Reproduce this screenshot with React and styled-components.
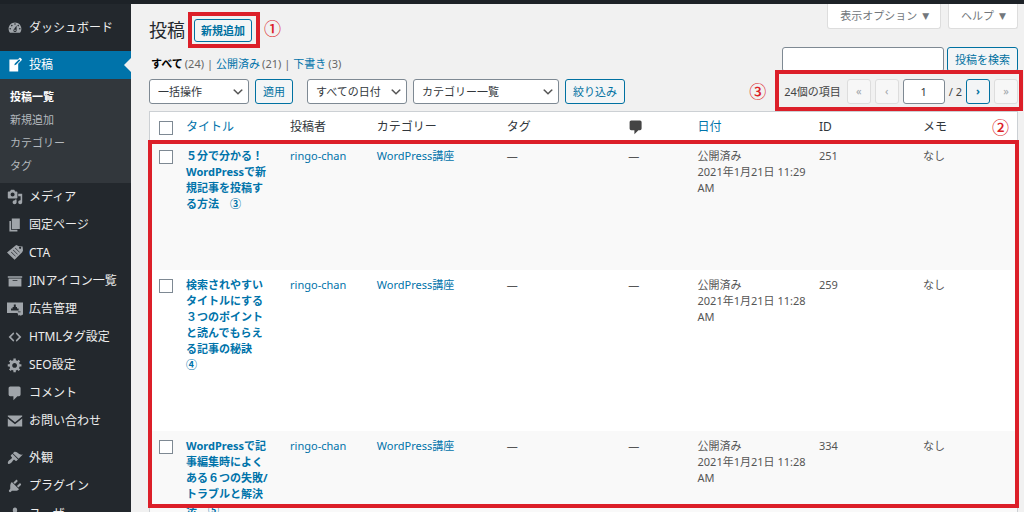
import React, { useState } from 'react';
import styled, { createGlobalStyle, css } from 'styled-components';

const GlobalStyle = createGlobalStyle`
  * {
    box-sizing: border-box;
  }
  body {
    margin: 0;
    background: #f1f1f1;
    color: #444;
    font-family: 'Noto Sans', 'Noto Sans CJK JP', sans-serif;
    font-size: 11px;
    line-height: 16px;
  }
  button, input, select {
    font: inherit;
    margin: 0;
  }
  a {
    color: #0073aa;
    text-decoration: none;
  }
`;

const Page = styled.div`
  display: flex;
  flex-direction: column;
  height: 100vh;
  overflow: hidden;
`;
const AdminBar = styled.header`
  flex: none;
  height: 4px;
  background: #1d2227;
`;
const Columns = styled.div`
  display: flex;
  flex: 1;
  min-height: 0;
`;

const Sidebar = styled.nav`
  flex: none;
  width: 131px;
  padding-top: 10px;
  background: #23282d;
  overflow: hidden;
`;
const Menu = styled.ul`
  list-style: none;
  margin: 0 0 9px;
  padding: 0;
`;
const MenuLink = styled.a`
  position: relative;
  display: flex;
  align-items: center;
  gap: 6px;
  height: 28px;
  padding-left: 7px;
  font-size: 12px;
  white-space: nowrap;
  color: #eee;
  svg {
    flex: none;
    fill: #a0a5aa;
  }
  ${({ $current }) =>
    $current &&
    css`
      background: #0073aa;
      color: #fff;
      svg {
        fill: #fff;
      }
      &::after {
        content: '';
        position: absolute;
        right: 0;
        border: 7px solid transparent;
        border-right-color: #f1f1f1;
        border-left: none;
      }
    `}
`;
const SubMenu = styled.ul`
  list-style: none;
  margin: 0;
  padding: 6px 0;
  background: #32373c;
`;
const SubLink = styled.a`
  display: block;
  padding-left: 10px;
  line-height: 23px;
  color: ${({ $current }) => ($current ? '#fff' : '#b4b9be')};
  font-weight: ${({ $current }) => ($current ? 700 : 400)};
`;

const Content = styled.main`
  flex: 1;
  min-width: 0;
  padding: 0 6px 0 18px;
`;
const TopRow = styled.div`
  display: flex;
  justify-content: space-between;
  align-items: flex-start;
  height: 43px;
`;
const TitleBar = styled.div`
  display: flex;
  align-items: center;
  gap: 9px;
  padding-top: 15px;
`;
const Heading = styled.h1`
  margin: 0;
  font-size: 18px;
  line-height: 23px;
  font-weight: 400;
  color: #23282d;
`;
const ScreenLinks = styled.div`
  display: flex;
  gap: 7px;
`;
const ScreenButton = styled.button`
  display: flex;
  align-items: center;
  gap: 5px;
  height: 25px;
  padding: 0 11px 0 12px;
  background: #fff;
  border: 1px solid #ddd;
  border-top: none;
  border-radius: 0 0 3px 3px;
  color: #72777c;
  cursor: pointer;
  &::after {
    content: '▼';
    font-family: 'DejaVu Sans', sans-serif;
    font-size: 9px;
  }
`;

const Button = styled.button`
  height: ${({ $small }) => ($small ? '23px' : '25px')};
  padding: 0 ${({ $small }) => ($small ? '6px' : '7px')};
  border: 1px solid #0071a1;
  border-radius: 3px;
  background: #f3f5f6;
  color: #0071a1;
  font-weight: ${({ $small }) => ($small ? 700 : 400)};
  white-space: nowrap;
  cursor: pointer;
`;
const TextInput = styled.input`
  width: ${({ $width }) => $width};
  height: 25px;
  padding: 0 6px;
  border: 1px solid #7e8993;
  border-radius: 3px;
  background: #fff;
  color: #32373c;
  text-align: ${({ $align }) => $align || 'left'};
`;

const FilterRow = styled.div`
  display: flex;
  justify-content: space-between;
  align-items: flex-start;
`;
const StatusList = styled.ul`
  display: flex;
  list-style: none;
  margin: 0;
  padding: 9px 0 0 2px;
  color: #666;
  li + li::before {
    content: '|';
    margin: 0 3px;
  }
`;
const StatusLink = styled.a`
  margin-right: 2px;
  ${({ $current }) =>
    $current &&
    css`
      color: #000;
      font-weight: 700;
    `}
`;
const SearchBox = styled.form`
  display: flex;
  gap: 3px;
`;
const Actions = styled.div`
  display: flex;
  align-items: center;
  gap: 6px;
`;
const TableNav = styled.div`
  display: flex;
  justify-content: space-between;
  align-items: center;
  margin: 7px 0;
`;
const SelectBox = styled.span`
  position: relative;
  display: inline-flex;
  width: ${({ $width }) => $width};
  margin-left: ${({ $gap }) => $gap || 0};
  svg {
    position: absolute;
    right: 4px;
    top: 6px;
    fill: #555;
    pointer-events: none;
  }
`;
const Select = styled.select`
  appearance: none;
  width: 100%;
  height: 25px;
  padding: 0 20px 0 8px;
  border: 1px solid #7e8993;
  border-radius: 3px;
  background: #fff;
  color: #32373c;
`;

const Pagination = styled.div`
  position: relative;
  display: flex;
  align-items: center;
  gap: 4px;
`;
const Count = styled.span`
  margin-right: 2px;
`;
const PageButton = styled.button`
  width: 24px;
  height: 25px;
  padding: 0 0 2px;
  border: 1px solid ${({ disabled }) => (disabled ? '#ddd' : '#0071a1')};
  border-radius: 3px;
  background: ${({ disabled }) => (disabled ? '#f7f7f7' : '#f3f5f6')};
  color: ${({ disabled }) => (disabled ? '#a0a5aa' : '#0071a1')};
  font-weight: ${({ disabled }) => (disabled ? 400 : 700)};
`;

const TableWrap = styled.div`
  flex: 1;
  border: 1px solid #ccd0d4;
  background: #fff;
`;
const Table = styled.table`
  width: 100%;
  table-layout: fixed;
  border-collapse: collapse;
  th, td {
    padding: 7px 0 0 8px;
    text-align: left;
    vertical-align: top;
    font-weight: 400;
  }
  thead th {
    height: 29px;
    font-size: 12px;
    color: #32373c;
    vertical-align: middle;
    padding: 0 0 0 8px;
  }
  thead svg {
    display: block;
    fill: #444;
  }
  tbody td {
    color: #555;
  }
  tbody tr:nth-child(odd) {
    background: #f9f9f9;
  }
`;
const Col = styled.col`
  width: ${({ $width }) => $width};
`;
const Checkbox = styled.input`
  appearance: none;
  display: block;
  width: 14px;
  height: 14px;
  margin: 2px 0 0 1px;
  border: 1px solid #7e8993;
  background: #fff;
  &:checked {
    background: #0073aa;
  }
`;
const TitleCell = styled.td`
  && {
    padding-bottom: 58px;
  }
`;
const TitleLink = styled.a`
  display: block;
  font-weight: 700;
  white-space: pre;
`;

const Marked = styled.div`
  position: relative;
  display: flex;
`;
const MarkFrame = styled.span`
  position: absolute;
  inset: ${({ $inset }) => $inset};
  border: 4px solid #dc1f29;
  pointer-events: none;
`;
const MarkNumber = styled.span`
  position: absolute;
  ${({ $place }) => $place}
  font-size: 17px;
  line-height: 20px;
  font-weight: 500;
  font-family: 'Noto Sans CJK JP', sans-serif;
  color: #dc1f29;
`;

const icons = {
  dashboard:
    'M3.76 16h12.48c1.1-1.37 1.76-3.11 1.76-5 0-4.42-3.58-8-8-8s-8 3.58-8 8c0 1.89.66 3.63 1.76 5zM10 4c.55 0 1 .45 1 1s-.45 1-1 1-1-.45-1-1 .45-1 1-1zM6 6c.55 0 1 .45 1 1s-.45 1-1 1-1-.45-1-1 .45-1 1-1zm8 0c.55 0 1 .45 1 1s-.45 1-1 1-1-.45-1-1 .45-1 1-1zm-5.37 5.55L12 7v6c0 1.1-.9 2-2 2s-2-.9-2-2c0-.57.24-1.08.63-1.45zM4 10c.55 0 1 .45 1 1s-.45 1-1 1-1-.45-1-1 .45-1 1-1zm12 0c.55 0 1 .45 1 1s-.45 1-1 1-1-.45-1-1 .45-1 1-1zm-5 3c0-.55-.45-1-1-1s-1 .45-1 1 .45 1 1 1 1-.45 1-1z',
  write:
    'M16.89 1.2l1.41 1.41c.39.39.39 1.02 0 1.41L14 8.33V18H3V3h10.67l1.8-1.8c.4-.39 1.03-.4 1.42 0zm-5.66 8.48l5.37-5.36-1.42-1.42-5.36 5.37-.71 2.12z',
  media:
    'M13 11V4c0-.55-.45-1-1-1h-1.67L9 1H5L3.67 3H2c-.55 0-1 .45-1 1v7c0 .55.45 1 1 1h10c.55 0 1-.45 1-1zM7 4.5c1.38 0 2.5 1.12 2.5 2.5S8.38 9.5 7 9.5 4.5 8.38 4.5 7 5.62 4.5 7 4.5zM14 6h5v10.5c0 1.38-1.12 2.5-2.5 2.5S14 17.88 14 16.5s1.12-2.5 2.5-2.5c.17 0 .34.02.5.05V9h-3V6zm-4 8.05V13h2v3.5c0 1.38-1.12 2.5-2.5 2.5S7 17.88 7 16.5 8.12 14 9.5 14c.17 0 .34.02.5.05z',
  page: 'M6 15V2h10v13H6zm-1 1h8v2H3V5h2v11z',
  ticket:
    'M11.500 0l3.500 1.500 4.500.5.500 5-1 2-9.500 9.500L0 9.500zM15 3.500a1.400 1.400 0 1 0 2.800 0 1.400 1.400 0 1 0-2.800 0zM10 4l5.500 5.500.5-.5L10.500 3.500zM7.500 6.500l5.500 5.500.5-.5L8 6zM5 9l5.500 5.500.5-.5L5.500 8.500z',
  archive: 'M19 4v2H1V4h18zM2 7h16v10H2V7zm11 3V9H7v1h6z',
  ads: 'M0 2h20v15l-3 1.500-1-1-1.500 1-1.500-3.500H0zM8.500 4.500h2.500v3h1.500v2h2v2.500H5v-2.500h2v-2h1.500zM13.500 13l.5 1h3v-1z',
  code: 'M9 6l-4 4 4 4-1 2-6-6 6-6zm2 8l4-4-4-4 1-2 6 6-6 6z',
  gear: 'M18 12h-2.18c-.17.7-.44 1.35-.81 1.93l1.54 1.54-2.1 2.1-1.54-1.54c-.58.36-1.23.63-1.91.79V19H8v-2.18c-.68-.16-1.33-.43-1.91-.79l-1.54 1.54-2.12-2.12 1.54-1.54c-.36-.58-.63-1.23-.79-1.91H1V9.03h2.17c.16-.7.44-1.35.8-1.94L2.43 5.55l2.1-2.1 1.54 1.54c.58-.37 1.24-.64 1.93-.81V2h3v2.18c.68.16 1.33.43 1.91.79l1.54-1.54 2.12 2.12-1.54 1.54c.36.59.64 1.24.8 1.94H18V12zm-8.5 1.5c1.66 0 3-1.34 3-3s-1.34-3-3-3-3 1.34-3 3 1.34 3 3 3z',
  comment: 'M4 2h11c1.1 0 2 .9 2 2v8c0 1.1-.9 2-2 2h-2l-5 5v-5H4c-1.1 0-2-.9-2-2V4c0-1.1.9-2 2-2z',
  mail: 'M1 3h18v1.500l-9 7-9-7zM1 7l9 7 9-7v10H1z',
  brush:
    'M14.48 11.06L7.41 3.99l1.5-1.5c.5-.56 2.3-.47 3.51.32 1.21.8 1.43 1.28 2.91 2.1 1.18.64 2.45 1.26 4.45.85zm-.71.71L6.7 4.7 4.93 6.47c-.39.39-.39 1.02 0 1.41l1.06 1.06c.39.39.39 1.03 0 1.42-.6.6-1.43 1.11-2.21 1.69-.35.26-.7.53-1.01.84C1.43 14.23.4 16.08 1.4 17.07c.99 1 2.84-.03 4.18-1.36.31-.31.58-.66.85-1.02.57-.78 1.08-1.61 1.69-2.21.39-.39 1.02-.39 1.41 0l1.06 1.06c.39.39 1.02.39 1.41 0z',
  plug: 'M13.11 4.36L9.87 7.6 8 5.73l3.24-3.24c.35-.34 1.05-.2 1.56.32.52.51.66 1.21.31 1.55zm-8 1.77l.91-1.12 9.01 9.01-1.19.84c-.71.71-2.63 1.16-3.82 1.16H6.14L4.9 17.26c-.59.59-1.54.59-2.12 0-.59-.58-.59-1.53 0-2.12l1.24-1.24v-3.88c0-1.13.4-3.19 1.09-3.89zm7.26 3.97l3.24-3.24c.34-.35 1.04-.21 1.55.31.52.51.66 1.21.31 1.55l-3.24 3.25z',
  user: 'M10 9.25c-2.27 0-2.73-3.44-2.73-3.44C7 4.02 7.82 2 9.97 2c2.16 0 2.98 2.02 2.71 3.81 0 0-.41 3.44-2.68 3.44zm0 2.57L12.72 10c2.39 0 4.52 2.33 4.52 4.53v2.49s-3.65 1.13-7.24 1.13c-3.65 0-7.24-1.13-7.24-1.13v-2.49c0-2.25 1.94-4.48 4.47-4.48z',
  down: 'M5 6l5 5 5-5 2 1-7 7-7-7 2-1z'
};

const Icon = ({ name, size = 16 }) => (
  <svg width={size} height={size} viewBox="0 0 20 20" fillRule="evenodd" aria-hidden="true">
    <path d={icons[name]} />
  </svg>
);

const menuGroups = [
  [{ icon: 'dashboard', label: 'ダッシュボード' }],
  [
    { icon: 'write', label: '投稿', current: true, children: ['投稿一覧', '新規追加', 'カテゴリー', 'タグ'] },
    { icon: 'media', label: 'メディア' },
    { icon: 'page', label: '固定ページ' },
    { icon: 'ticket', label: 'CTA' },
    { icon: 'archive', label: 'JINアイコン一覧' },
    { icon: 'ads', label: '広告管理' },
    { icon: 'code', label: 'HTMLタグ設定' },
    { icon: 'gear', label: 'SEO設定' },
    { icon: 'comment', label: 'コメント' },
    { icon: 'mail', label: 'お問い合わせ' }
  ],
  [
    { icon: 'brush', label: '外観' },
    { icon: 'plug', label: 'プラグイン' },
    { icon: 'user', label: 'ユーザー' }
  ]
];

const statuses = [
  { label: 'すべて', count: 24, current: true },
  { label: '公開済み', count: 21 },
  { label: '下書き', count: 3 }
];

const posts = [
  { id: 251, title: '５分で分かる！\nWordPressで新\n規記事を投稿す\nる方法　③', date: '2021年1月21日 11:29 AM' },
  {
    id: 259,
    title: '検索されやすい\nタイトルにする\n３つのポイント\nと読んでもらえ\nる記事の秘訣\n④',
    date: '2021年1月21日 11:28 AM'
  },
  {
    id: 334,
    title: 'WordPressで記\n事編集時によく\nある６つの失敗/\nトラブルと解決\n法　⑤',
    date: '2021年1月21日 11:28 AM'
  }
];

const columnWidths = ['28px', '12%', '10%', '15%', '14%', '8%', '14%', '12%', 'auto'];

function Dropdown({ label, options, width, gap }) {
  return (
    <SelectBox $width={width} $gap={gap}>
      <Select aria-label={label}>
        {options.map((option) => (
          <option key={option}>{option}</option>
        ))}
      </Select>
      <Icon name="down" size={14} />
    </SelectBox>
  );
}

function App() {
  const [selected, setSelected] = useState([]);
  const [page, setPage] = useState('1');
  const [search, setSearch] = useState('');

  const toggle = (id) => {
    setSelected(selected.includes(id) ? selected.filter((item) => item !== id) : [...selected, id]);
  };
  const toggleAll = (e) => {
    setSelected(e.target.checked ? posts.map((post) => post.id) : []);
  };

  return (
    <Page>
      <GlobalStyle />
      <AdminBar />
      <Columns>
        <Sidebar>
          {menuGroups.map((group) => (
            <Menu key={group[0].label}>
              {group.map((item) => (
                <li key={item.label}>
                  <MenuLink href="#" $current={item.current}>
                    <Icon name={item.icon} />
                    {item.label}
                  </MenuLink>
                  {item.children && (
                    <SubMenu>
                      {item.children.map((child, index) => (
                        <li key={child}>
                          <SubLink href="#" $current={index === 0}>
                            {child}
                          </SubLink>
                        </li>
                      ))}
                    </SubMenu>
                  )}
                </li>
              ))}
            </Menu>
          ))}
        </Sidebar>
        <Content>
          <TopRow>
            <TitleBar>
              <Heading>投稿</Heading>
              <Marked>
                <Button type="button" $small>
                  新規追加
                </Button>
                <MarkFrame $inset="-7px -8px -6px -6px" />
                <MarkNumber $place="left: 70px; top: -1px;">①</MarkNumber>
              </Marked>
            </TitleBar>
            <ScreenLinks>
              <ScreenButton type="button">表示オプション</ScreenButton>
              <ScreenButton type="button">ヘルプ</ScreenButton>
            </ScreenLinks>
          </TopRow>
          <FilterRow>
            <StatusList>
              {statuses.map((status) => (
                <li key={status.label}>
                  <StatusLink href="#" $current={status.current}>
                    {status.label}
                  </StatusLink>
                  ({status.count})
                </li>
              ))}
            </StatusList>
            <SearchBox onSubmit={(e) => e.preventDefault()}>
              <TextInput
                type="search"
                aria-label="投稿を検索"
                $width="162px"
                value={search}
                onChange={(e) => setSearch(e.target.value)}
              />
              <Button type="submit">投稿を検索</Button>
            </SearchBox>
          </FilterRow>
          <TableNav>
            <Actions>
              <Dropdown label="一括操作" width="100px" options={['一括操作', '編集', 'ゴミ箱へ移動']} />
              <Button type="button">適用</Button>
              <Dropdown label="日付" width="100px" gap="8px" options={['すべての日付', '2021年1月']} />
              <Dropdown label="カテゴリー" width="146px" options={['カテゴリー一覧', 'WordPress講座']} />
              <Button type="button">絞り込み</Button>
            </Actions>
            <Pagination>
              <Count>24個の項目</Count>
              <PageButton type="button" disabled aria-label="最初のページ">
                «
              </PageButton>
              <PageButton type="button" disabled aria-label="前のページ">
                ‹
              </PageButton>
              <TextInput
                type="text"
                aria-label="現在のページ"
                $width="42px"
                $align="center"
                value={page}
                onChange={(e) => setPage(e.target.value)}
              />
              <span>/ 2</span>
              <PageButton type="button" aria-label="次のページ">
                ›
              </PageButton>
              <PageButton type="button" disabled aria-label="最後のページ">
                »
              </PageButton>
              <MarkFrame $inset="-9px -5px -7px -9px" />
              <MarkNumber $place="left: -35px; top: 2px;">③</MarkNumber>
            </Pagination>
          </TableNav>
          <Marked>
            <TableWrap>
              <Table>
                <colgroup>
                  {columnWidths.map((width, index) => (
                    <Col key={index} $width={width} />
                  ))}
                </colgroup>
                <thead>
                  <tr>
                    <th>
                      <Checkbox
                        type="checkbox"
                        aria-label="すべて選択"
                        checked={selected.length === posts.length}
                        onChange={toggleAll}
                      />
                    </th>
                    <th>
                      <a href="#">タイトル</a>
                    </th>
                    <th>投稿者</th>
                    <th>カテゴリー</th>
                    <th>タグ</th>
                    <th aria-label="コメント">
                      <Icon name="comment" />
                    </th>
                    <th>
                      <a href="#">日付</a>
                    </th>
                    <th>ID</th>
                    <th>メモ</th>
                  </tr>
                </thead>
                <tbody>
                  {posts.map((post) => (
                    <tr key={post.id}>
                      <td>
                        <Checkbox
                          type="checkbox"
                          aria-label={`${post.id}を選択`}
                          checked={selected.includes(post.id)}
                          onChange={() => toggle(post.id)}
                        />
                      </td>
                      <TitleCell>
                        <TitleLink href="#">{post.title}</TitleLink>
                      </TitleCell>
                      <td>
                        <a href="#">ringo-chan</a>
                      </td>
                      <td>
                        <a href="#">WordPress講座</a>
                      </td>
                      <td>—</td>
                      <td>—</td>
                      <td>
                        公開済み
                        <br />
                        {post.date}
                      </td>
                      <td>{post.id}</td>
                      <td>なし</td>
                    </tr>
                  ))}
                </tbody>
              </Table>
            </TableWrap>
            <MarkFrame $inset="29px -1px 69px -1px" />
            <MarkNumber $place="right: 9px; top: 6px;">②</MarkNumber>
          </Marked>
        </Content>
      </Columns>
    </Page>
  );
}

export default App;
